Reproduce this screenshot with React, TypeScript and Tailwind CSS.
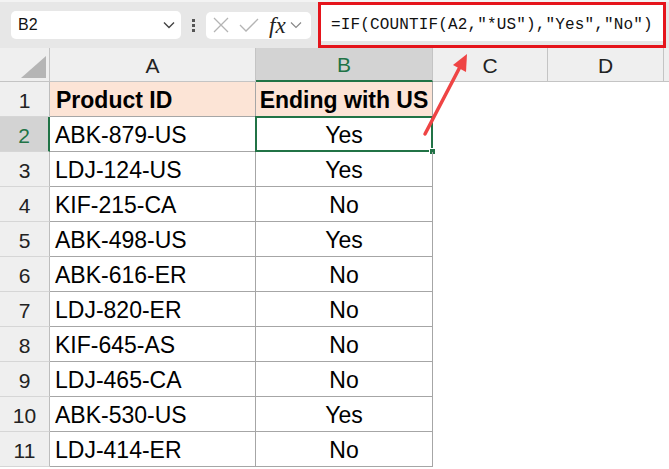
import React from "react";

const data: [string, string][] = [
  ["ABK-879-US", "Yes"],
  ["LDJ-124-US", "Yes"],
  ["KIF-215-CA", "No"],
  ["ABK-498-US", "Yes"],
  ["ABK-616-ER", "No"],
  ["LDJ-820-ER", "No"],
  ["KIF-645-AS", "No"],
  ["LDJ-465-CA", "No"],
  ["ABK-530-US", "Yes"],
  ["LDJ-414-ER", "No"],
];

export default function App() {
  return (
    <div className="relative w-[669px] h-[469px] overflow-hidden bg-white font-['Liberation_Sans',Arial,sans-serif] text-black">
      {/* Toolbar */}
      <div className="flex h-[48px] items-center bg-[#e7e7e7] pl-[11px] border-t-[2px] border-[#f3f3f3]">
        <div className="flex h-[28px] w-[170px] items-center justify-between rounded-[5px] bg-white pl-[7px] pr-[6px] text-[16px] text-[#111]">
          <span>B2</span>
          <svg width="12" height="8" viewBox="0 0 12 8">
            <path d="M1 1.5 L6 6.5 L11 1.5" fill="none" stroke="#444" strokeWidth="1.4" />
          </svg>
        </div>
        <div className="ml-[11px] flex flex-col gap-[2px]">
          <div className="h-[3px] w-[3px] bg-[#555]" />
          <div className="h-[3px] w-[3px] bg-[#555]" />
          <div className="h-[3px] w-[3px] bg-[#555]" />
        </div>
        <div className="ml-[11px] flex h-[27px] w-[105px] items-center rounded-[5px] bg-white pl-[7px]">
          <svg width="16" height="16" viewBox="0 0 16 16">
            <path d="M1 1 L15 15 M15 1 L1 15" stroke="#b4b4b4" strokeWidth="1.3" />
          </svg>
          <svg className="ml-[10px]" width="20" height="16" viewBox="0 0 20 16">
            <path d="M1 8 L7 14 L19 2" fill="none" stroke="#b4b4b4" strokeWidth="1.3" />
          </svg>
          <span className="ml-[10px] font-['Liberation_Serif',serif] text-[23px] italic leading-none text-[#222]">fx</span>
          <svg className="ml-[4px]" width="12" height="8" viewBox="0 0 12 8">
            <path d="M1 1.5 L6 6.5 L11 1.5" fill="none" stroke="#888" strokeWidth="1.2" />
          </svg>
        </div>
        <div className="ml-[7px] flex h-[46px] w-[348px] flex-col self-start border-[3px] border-[#e5141b] bg-[#e7e7e7]">
          <div className="flex h-[36px] items-center bg-white pl-[10px] pt-[4px] font-['Liberation_Mono',monospace] text-[16px] tracking-[0.15px] text-[#111]">
            =IF(COUNTIF(A2,"*US"),"Yes","No")
          </div>
        </div>
      </div>

      {/* Column headers */}
      <div className="flex h-[34px] bg-[#efefef] text-[21px] text-[#222]">
        <div className="relative w-[50px] shrink-0 border-r border-b border-[#c4c4c4]">
          <svg className="absolute left-0 top-0" width="50" height="34" viewBox="0 0 50 34">
            <polygon points="46,8 46,30 21,30" fill="#b5b5b5" />
          </svg>
        </div>
        <div className="flex w-[206px] shrink-0 items-center justify-center border-r border-b border-[#c4c4c4] pt-[2px]">A</div>
        <div className="flex w-[177px] shrink-0 items-center justify-center border-r border-[#c4c4c4] border-b-2 border-b-[#217346] bg-[#d3d3d3] pt-[2px] text-[#217346]">B</div>
        <div className="flex w-[115px] shrink-0 items-center justify-center border-r border-b border-[#c4c4c4] pt-[2px]">C</div>
        <div className="flex w-[116px] shrink-0 items-center justify-center border-r border-b border-[#c4c4c4] pt-[2px]">D</div>
        <div className="flex-1 border-b border-[#c4c4c4]" />
      </div>

      {/* Row 1 */}
      <div className="flex h-[35px]">
        <div className="flex w-[50px] shrink-0 items-center justify-center border-r border-b border-r-[#bdbdbd] border-b-[#d6d6d6] bg-[#efefef] pt-[3px] text-[21px] text-[#222]">1</div>
        <div className="flex w-[206px] shrink-0 items-center border-r border-b border-[#a6a6a6] bg-[#fce4d6] px-[6px] pt-[3px] text-[23px] font-bold">Product ID</div>
        <div className="flex w-[177px] shrink-0 items-center justify-center border-r border-b border-[#a6a6a6] bg-[#fce4d6] pt-[3px] text-[23px] font-bold">Ending with US</div>
        <div className="flex-1" />
      </div>

      {data.map(([id, v], i) => {
        const n = i + 2;
        const sel = n === 2;
        return (
          <div key={n} className="flex h-[35px]">
            <div
              className={
                sel
                  ? "flex w-[50px] shrink-0 items-center justify-center border-r-2 border-b border-r-[#217346] border-b-[#d6d6d6] bg-[#d3d3d3] pt-[3px] text-[21px] text-[#217346]"
                  : "flex w-[50px] shrink-0 items-center justify-center border-r border-b border-r-[#bdbdbd] border-b-[#d6d6d6] bg-[#efefef] pt-[3px] text-[21px] text-[#222]"
              }
            >
              {n}
            </div>
            <div className="flex w-[206px] shrink-0 items-center border-r border-b border-[#a6a6a6] px-[5px] pt-[3px] text-[23px]">{id}</div>
            <div className="relative flex w-[177px] shrink-0 items-center justify-center border-r border-b border-[#a6a6a6] pt-[3px] text-[23px]">
              {v}
              {sel && (
                <>
                  <div className="absolute -left-[1px] -top-[1px] -right-[1px] -bottom-[1px] border-2 border-[#217346]" />
                  <div className="absolute -right-[4px] -bottom-[4px] h-[7px] w-[7px] border border-white bg-[#217346]" />
                </>
              )}
            </div>
            <div className="flex-1" />
          </div>
        );
      })}

      {/* Arrow annotation */}
      <svg className="pointer-events-none absolute left-0 top-0" width="669" height="469" viewBox="0 0 669 469">
        <line x1="425" y1="134" x2="461" y2="65" stroke="#ef4444" strokeWidth="3.5" strokeLinecap="round" />
        <polygon points="467,54 466,72 453,65" fill="#ef4444" />
      </svg>
    </div>
  );
}
